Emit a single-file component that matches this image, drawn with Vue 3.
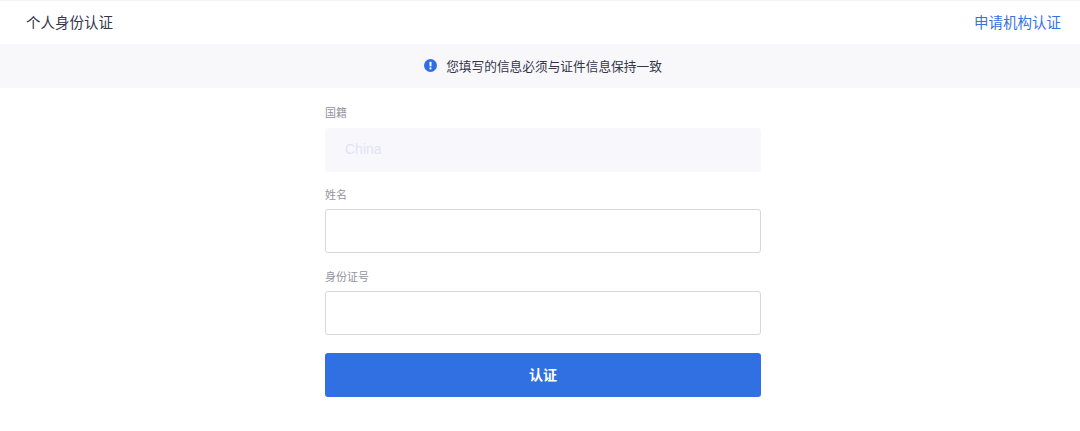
<template>
  <div class="page">
    <header class="top-bar">
      <h1 class="title">个人身份认证</h1>
      <a class="org-link">申请机构认证</a>
    </header>

    <div class="notice">
      <svg class="notice-icon" viewBox="0 0 14 14" aria-hidden="true">
        <circle cx="7" cy="7" r="7" fill="#2f6fe4" />
        <rect x="5.9" y="3" width="2.2" height="5" rx="0.7" fill="#fff" />
        <circle cx="7" cy="10.2" r="1.2" fill="#fff" />
      </svg>
      <span>您填写的信息必须与证件信息保持一致</span>
    </div>

    <form class="form" @submit.prevent>
      <div v-for="field in fields" :key="field.label" class="field">
        <label class="label">{{ field.label }}</label>
        <input
          class="input"
          type="text"
          :value="field.value"
          :disabled="field.disabled"
        />
      </div>
      <button class="submit" type="submit">认证</button>
    </form>
  </div>
</template>

<script setup>
const fields = [
  { label: '国籍', value: 'China', disabled: true },
  { label: '姓名', value: '', disabled: false },
  { label: '身份证号', value: '', disabled: false }
]
</script>

<style scoped>
.page {
  height: 431px;
  background: #fff;
  overflow: hidden;
  font-family: "Liberation Sans", "Noto Sans CJK SC", sans-serif;
}

.top-bar {
  height: 44px;
  box-sizing: border-box;
  border-top: 1px solid #f3f3f7;
  padding: 0 19px 2px 26px;
  display: flex;
  align-items: center;
  justify-content: space-between;
}

.title {
  margin: 0;
  font-size: 14.5px;
  font-weight: 400;
  color: #34354a;
}

.org-link {
  font-size: 14.5px;
  color: #3573e0;
  cursor: pointer;
}

.notice {
  height: 44px;
  box-sizing: border-box;
  padding: 0 0 2px 6px;
  background: #f8f8fb;
  display: flex;
  align-items: center;
  justify-content: center;
  gap: 9px;
  font-size: 12.7px;
  color: #34354a;
}

.notice-icon {
  width: 13px;
  height: 13px;
  margin-top: 1px;
}

.form {
  width: 436px;
  margin-left: 325px;
  padding-top: 18px;
  display: flex;
  flex-direction: column;
}

.field {
  margin-bottom: 16px;
}

.field:nth-child(2) {
  margin-bottom: 17px;
}

.field:last-of-type {
  margin-bottom: 18px;
}

.label {
  display: block;
  height: 14px;
  line-height: 14px;
  margin-bottom: 7px;
  font-size: 11px;
  color: #94949e;
}

.field:first-child .label {
  margin-bottom: 8px;
}

.input {
  display: block;
  width: 100%;
  height: 44px;
  box-sizing: border-box;
  padding: 0 19px;
  background: #fff;
  border: 1px solid #d8d8dc;
  border-radius: 3px;
  outline: none;
  font-family: inherit;
  font-size: 14px;
  color: #34354a;
}

.input:disabled {
  padding-bottom: 2px;
  background: #f8f8fc;
  border-color: #f8f8fc;
  color: #e2e2f5;
  -webkit-text-fill-color: #e2e2f5;
  opacity: 1;
}

.submit {
  height: 44px;
  padding: 0 0 2px;
  border: none;
  border-radius: 3px;
  background: #3070e2;
  color: #fff;
  font-family: inherit;
  font-size: 14px;
  font-weight: 700;
  cursor: pointer;
}
</style>
